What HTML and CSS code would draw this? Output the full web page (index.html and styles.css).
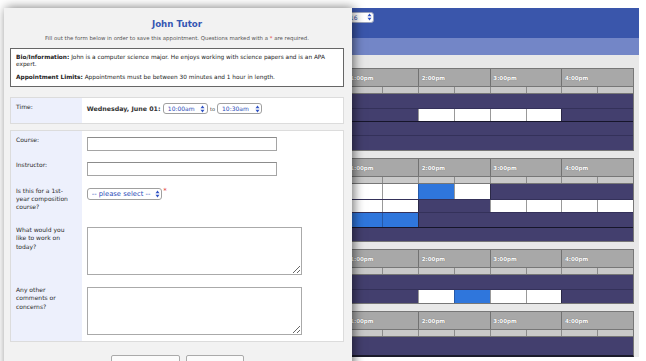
FILE: index.html
```html
<!DOCTYPE html>
<html>
<head>
  <title>Schedule an Appointment</title>
  <link rel="stylesheet" href="styles.css">
</head>
<body>
  <div class="app">
    <div class="topbar">
      <span class="week-select">Jun 2016
        <svg class="arrows" width="5" height="8" viewBox="0 0 5 8"><polygon points="0.5,3.2 2.5,0.4 4.5,3.2"/><polygon points="0.5,4.8 2.5,7.6 4.5,4.8"/></svg>
      </span>
    </div>
    <div class="subbar"></div>
    <div class="schedule">

      <div class="sched">
        <div class="srow head"><div class="corner"></div><div class="hour">1:00pm</div><div class="hour">2:00pm</div><div class="hour">3:00pm</div><div class="hour">4:00pm</div></div>
        <div class="srow subhead"><div></div><div class="half"></div><div class="half"></div><div class="half"></div><div class="half"></div><div class="half"></div><div class="half"></div><div class="half"></div><div class="half"></div></div>
        <div class="srow h15"><div class="name"></div><div class="busy s8"></div></div>
        <div class="srow h13 sep"><div class="name"></div><div class="busy s2"></div><div class="open"></div><div class="open"></div><div class="open"></div><div class="open"></div><div class="busy s2"></div></div>
        <div class="srow h14"><div class="name"></div><div class="busy s8"></div></div>
        <div class="srow h14"><div class="name"></div><div class="busy s8"></div></div>
      </div>

      <div class="sched">
        <div class="srow head"><div class="corner"></div><div class="hour">1:00pm</div><div class="hour">2:00pm</div><div class="hour">3:00pm</div><div class="hour">4:00pm</div></div>
        <div class="srow subhead"><div></div><div class="half"></div><div class="half"></div><div class="half"></div><div class="half"></div><div class="half"></div><div class="half"></div><div class="half"></div><div class="half"></div></div>
        <div class="srow h16"><div class="name"></div><div class="open"></div><div class="open"></div><div class="booked"></div><div class="open"></div><div class="busy s4"></div></div>
        <div class="srow h13"><div class="name"></div><div class="open"></div><div class="open"></div><div class="busy s2"></div><div class="open"></div><div class="open"></div><div class="open"></div><div class="open"></div></div>
        <div class="srow h15 sep"><div class="name"></div><div class="booked"></div><div class="booked"></div><div class="busy s6"></div></div>
        <div class="srow h13"><div class="name"></div><div class="busy s8"></div></div>
      </div>

      <div class="sched">
        <div class="srow head"><div class="corner"></div><div class="hour">1:00pm</div><div class="hour">2:00pm</div><div class="hour">3:00pm</div><div class="hour">4:00pm</div></div>
        <div class="srow subhead"><div></div><div class="half"></div><div class="half"></div><div class="half"></div><div class="half"></div><div class="half"></div><div class="half"></div><div class="half"></div><div class="half"></div></div>
        <div class="srow h15"><div class="name"></div><div class="busy s8"></div></div>
        <div class="srow h13"><div class="name"></div><div class="busy s2"></div><div class="open"></div><div class="booked"></div><div class="open"></div><div class="open"></div><div class="busy s2"></div></div>
      </div>

      <div class="sched last">
        <div class="srow head"><div class="corner"></div><div class="hour">1:00pm</div><div class="hour">2:00pm</div><div class="hour">3:00pm</div><div class="hour">4:00pm</div></div>
        <div class="srow subhead"><div></div><div class="half"></div><div class="half"></div><div class="half"></div><div class="half"></div><div class="half"></div><div class="half"></div><div class="half"></div><div class="half"></div></div>
        <div class="srow h18"><div class="name"></div><div class="busy s8"></div></div>
      </div>

    </div>
  </div>

  <div class="modal">
    <h2 class="tutor-name">John Tutor</h2>
    <p class="form-note">Fill out the form below in order to save this appointment. Questions marked with a <span class="req">*</span> are required.</p>

    <div class="bio-box">
      <p><b>Bio/Information:</b> John is a computer science major. He enjoys working with science papers and is an APA expert.</p>
      <p><b>Appointment Limits:</b> Appointments must be between 30 minutes and 1 hour in length.</p>
    </div>

    <div class="form-box time-box">
      <div class="form-row">
        <div class="form-label">Time:</div>
        <div class="form-field time-field">
          <b>Wednesday, June 01:</b>
          <span class="select-wrap time-select">
            <select><option>10:00am</option><option>10:30am</option></select>
            <svg class="arrows" width="5" height="8" viewBox="0 0 5 8"><polygon points="0.5,3.2 2.5,0.4 4.5,3.2"/><polygon points="0.5,4.8 2.5,7.6 4.5,4.8"/></svg>
          </span>
          <span class="to">to</span>
          <span class="select-wrap time-select">
            <select><option>10:30am</option><option>11:00am</option></select>
            <svg class="arrows" width="5" height="8" viewBox="0 0 5 8"><polygon points="0.5,3.2 2.5,0.4 4.5,3.2"/><polygon points="0.5,4.8 2.5,7.6 4.5,4.8"/></svg>
          </span>
        </div>
      </div>
    </div>

    <form class="form-box">
      <div class="form-row">
        <label class="form-label" for="course">Course:</label>
        <div class="form-field"><input type="text" id="course" class="text-input"></div>
      </div>
      <div class="form-row">
        <label class="form-label" for="instructor">Instructor:</label>
        <div class="form-field"><input type="text" id="instructor" class="text-input"></div>
      </div>
      <div class="form-row tall-label">
        <label class="form-label" for="composition">Is this for a 1st-year composition course?</label>
        <div class="form-field">
          <span class="select-wrap pick-select">
            <select id="composition"><option>-- please select --</option><option>Yes</option><option>No</option></select>
            <svg class="arrows" width="5" height="8" viewBox="0 0 5 8"><polygon points="0.5,3.2 2.5,0.4 4.5,3.2"/><polygon points="0.5,4.8 2.5,7.6 4.5,4.8"/></svg>
          </span><span class="req star">*</span>
        </div>
      </div>
      <div class="form-row">
        <label class="form-label" for="work">What would you like to work on today?</label>
        <div class="form-field"><textarea id="work" class="text-area"></textarea></div>
      </div>
      <div class="form-row">
        <label class="form-label" for="comments">Any other comments or concerns?</label>
        <div class="form-field"><textarea id="comments" class="text-area"></textarea></div>
      </div>
    </form>

    <!-- button captions sit below the fold, so they carry aria labels only -->
    <div class="form-buttons">
      <button type="button" class="btn btn-save" aria-label="Save Appointment"></button>
      <button type="button" class="btn" aria-label="Cancel"></button>
    </div>
  </div>
</body>
</html>
```

FILE: styles.css
```css
html, body {
  margin: 0;
  height: 361px;
  overflow: hidden;
  background-color: #fff;
}

body {
  font-family: "DejaVu Sans", Verdana, sans-serif;
  color: #333;
}

/* background schedule page */

.app {
  width: 635px;
  height: 349px;
  margin: 8px 0 0 4px;
  display: flex;
  flex-direction: column;
  background-color: #e8e8e8;
  overflow: hidden;
}

.topbar {
  height: 30px;
  flex-shrink: 0;
  background-color: #3a56ab;
  display: flex;
  align-items: flex-start;
  padding: 3.7px 0 0 306px;
  box-sizing: border-box;
}

.week-select {
  width: 64px;
  height: 11.6px;
  box-sizing: border-box;
  display: flex;
  align-items: center;
  justify-content: flex-end;
  gap: 9px;
  padding-right: 1.5px;
  background-color: #fff;
  border: 1px solid #9aa3bd;
  border-radius: 3px;
  font-size: 6px;
  color: #2a4ab0;
}

.arrows {
  fill: #2f52c4;
  display: block;
}

.subbar {
  height: 17px;
  flex-shrink: 0;
  background-color: #7386c7;
}

.schedule {
  flex: 1;
  padding: 13px 5px 0;
}

.sched {
  border: 1px solid #777;
  margin-bottom: 7px;
  background-color: #433f6e;
}

.sched.last {
  border-bottom: 2px solid #1c1b2b;
}

.srow {
  display: grid;
  grid-template-columns: 1fr repeat(8, 35.8px);
  box-sizing: border-box;
  border-bottom: 1px solid #34315a;
}

.srow:last-child {
  border-bottom: none;
}

.srow.sep {
  border-bottom-color: #16152a;
}

.head {
  height: 18px;
  background-color: #a8a8a8;
  border-bottom: 1px solid #777;
}

.hour {
  grid-column: span 2;
  border-left: 1px solid #727272;
  padding-left: 2.5px;
  display: flex;
  align-items: center;
  font-size: 5.5px;
  font-weight: bold;
  color: #fff;
  text-shadow: 0 0 1px rgba(0, 0, 0, 0.45);
}

.subhead {
  height: 7px;
  background-color: #c9c9c9;
  border-bottom: 1px solid #777;
}

.half {
  border-left: 1px solid #8c8c8c;
}

.h13 { height: 13px; }
.h14 { height: 14px; }
.h15 { height: 15px; }
.h16 { height: 16px; }
.h18 { height: 18px; }

.name,
.busy {
  background-color: #433f6e;
}

.busy {
  border-left: 1px solid #2b2947;
}

.open {
  background-color: #fff;
  border-left: 1px solid #999;
}

.booked {
  background-color: #2f76dc;
  border-left: 1px solid #2659a8;
}

.s2 { grid-column: span 2; }
.s4 { grid-column: span 4; }
.s6 { grid-column: span 6; }
.s8 { grid-column: span 8; }

/* appointment dialog */

.modal {
  position: absolute;
  left: 4px;
  top: 8px;
  width: 348px;
  height: 370px;
  box-sizing: border-box;
  padding: 10px 8px 0 6px;
  background-color: #f2f2f2;
  box-shadow: 2px 0 10px rgba(0, 0, 0, 0.55);
}

.tutor-name {
  margin: 0;
  font-size: 8.7px;
  line-height: 12px;
  text-align: center;
  color: #3556b3;
}

.form-note {
  margin: 5px 0 0;
  font-size: 5.4px;
  line-height: 6px;
  text-align: center;
  color: #555;
}

.req {
  color: #e23b3b;
}

.bio-box {
  margin-top: 7.3px;
  padding: 4.6px 5px 4.2px;
  background-color: #fff;
  border: 1px solid #666;
  font-size: 5.8px;
  line-height: 7.5px;
  color: #222;
}

.bio-box p {
  margin: 0;
}

.bio-box p + p {
  margin-top: 5.2px;
}

.form-box {
  display: block;
  margin: 0;
  background-color: #fff;
  border: 1px solid #dcdcdc;
}

.time-box {
  margin: 10.6px 0 5.7px;
}

.form-row {
  display: flex;
}

.form-label {
  width: 70.7px;
  flex-shrink: 0;
  box-sizing: border-box;
  padding: 4.6px 9.7px 0 5px;
  background-color: #edf0fc;
  font-size: 6px;
  line-height: 8.3px;
  color: #2b2b2b;
}

.form-field {
  padding: 5.5px 5px 6px;
  display: flex;
  align-items: flex-start;
}

.tall-label .form-label {
  padding-bottom: 10px;
}

.time-box .form-label {
  padding-top: 4.2px;
}

.time-field {
  padding: 5px 5px 9px;
  align-items: center;
  font-size: 6.3px;
}

.time-field b {
  margin-right: 2.3px;
}

.to {
  font-size: 5px;
  margin: 0 2px 0 2.2px;
}

.select-wrap {
  position: relative;
  display: inline-block;
}

.select-wrap select {
  -webkit-appearance: none;
  appearance: none;
  display: block;
  margin: 0;
  box-sizing: border-box;
  padding: 0 0 0 4px;
  background-color: #fff;
  border: 1px solid #a0a0a0;
  border-radius: 3px;
  font-family: "DejaVu Sans", Verdana, sans-serif;
  color: #2a4bb8;
}

.select-wrap .arrows {
  position: absolute;
  right: 2.5px;
  top: 50%;
  margin-top: -4px;
}

.time-select select {
  width: 45px;
  height: 11px;
  font-size: 6px;
}

.pick-select select {
  width: 75.6px;
  height: 12.4px;
  font-size: 6.8px;
}

.star {
  font-size: 7px;
  line-height: 7px;
  margin-left: 1px;
}

.text-input {
  display: block;
  width: 190px;
  height: 14px;
  box-sizing: border-box;
  margin: 0;
  padding: 0 3px;
  border: 1px solid #a5a5a5;
  border-top-color: #8c8c8c;
  background-color: #fff;
}

.text-area {
  display: block;
  width: 215px;
  height: 48.4px;
  box-sizing: border-box;
  margin: 0;
  padding: 2px;
  border: 1px solid #aaa;
  background-color: #fff;
}

.form-buttons {
  display: flex;
  justify-content: center;
  gap: 6px;
  margin-top: 13px;
}

.btn {
  width: 58px;
  height: 22px;
  padding: 0;
  border: 1px solid #aaa;
  border-radius: 2px;
  background-color: #fbfbfb;
}

.btn-save {
  width: 69px;
}
```
